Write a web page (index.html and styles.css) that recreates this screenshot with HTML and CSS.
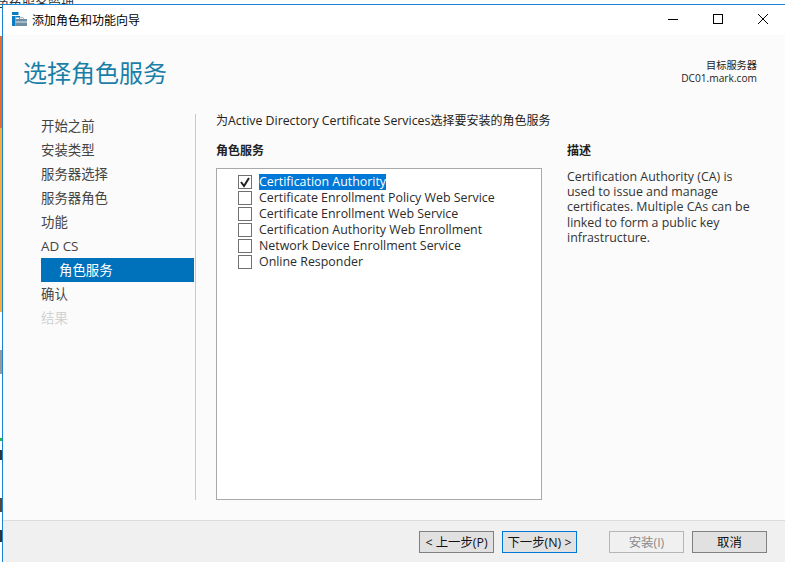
FILE: index.html
```html
<!DOCTYPE html>
<html lang="zh-CN">
<head>
<meta charset="utf-8">
<title>添加角色和功能向导</title>
<link rel="stylesheet" href="styles.css">
</head>
<body>
<div class="desktop">
  <div class="backdrop-title">角色服务管理</div>
  <div class="backdrop-strip"></div>
  <main class="window">
    <header class="titlebar">
      <svg class="app-icon" width="16" height="16" viewBox="0 0 16 16">
        <rect x="0" y="0" width="6.500" height="3" fill="#0a7cc4"/>
        <rect x="0" y="4" width="3.500" height="10" fill="#0a7cc4"/>
        <rect x="3.500" y="4" width="4.500" height="1.500" fill="#0a7cc4"/>
        <path d="M3.500 7H7V5.500h4.500V7H15v7H3.500z" fill="#6f8ea3"/>
        <rect x="8" y="6.200" width="3" height="0.800" fill="#fff"/>
        <rect x="3.500" y="9.500" width="11.500" height="1" fill="#dce6ee"/>
      </svg>
      <span class="title-text">添加角色和功能向导</span>
      <div class="win-controls">
        <svg width="12" height="12" viewBox="0 0 12 12"><path d="M1 6.500h10" stroke="#000" fill="none"/></svg>
        <svg width="12" height="12" viewBox="0 0 12 12"><rect x="1.500" y="1.500" width="9" height="9" stroke="#000" fill="none"/></svg>
        <svg width="12" height="12" viewBox="0 0 12 12"><path d="M1 1l10 10M11 1L1 11" stroke="#000" fill="none"/></svg>
      </div>
    </header>
    <div class="body">
      <section class="heading">
        <h1>选择角色服务</h1>
        <div class="target"><div>目标服务器</div><div>DC01.mark.com</div></div>
      </section>
      <section class="content">
        <nav class="steps">
          <div class="step">开始之前</div>
          <div class="step">安装类型</div>
          <div class="step">服务器选择</div>
          <div class="step">服务器角色</div>
          <div class="step">功能</div>
          <div class="step">AD CS</div>
          <div class="step active">角色服务</div>
          <div class="step">确认</div>
          <div class="step disabled">结果</div>
        </nav>
        <div class="pane">
          <p class="intro">为<span class="latin">Active Directory Certificate Services</span>选择要安装的角色服务</p>
          <div class="columns">
            <div class="roles">
              <h2>角色服务</h2>
              <div class="listbox">
                <label class="row"><span class="check"><svg width="12" height="12" viewBox="0 0 12 12"><path d="M2 6l3 4 5-8" stroke="#222" stroke-width="2" fill="none"/></svg></span><span class="selected">Certification Authority</span></label>
                <label class="row"><span class="check"></span><span>Certificate Enrollment Policy Web Service</span></label>
                <label class="row"><span class="check"></span><span>Certificate Enrollment Web Service</span></label>
                <label class="row"><span class="check"></span><span>Certification Authority Web Enrollment</span></label>
                <label class="row"><span class="check"></span><span>Network Device Enrollment Service</span></label>
                <label class="row"><span class="check"></span><span>Online Responder</span></label>
              </div>
            </div>
            <aside class="desc">
              <h2>描述</h2>
              <p>Certification Authority (CA) is used to issue and manage certificates. Multiple CAs can be linked to form a public key infrastructure.</p>
            </aside>
          </div>
        </div>
      </section>
    </div>
    <footer class="footer">
      <button class="btn">&lt; 上一步(P)</button>
      <button class="btn primary">下一步(N) &gt;</button>
      <button class="btn off">安装(I)</button>
      <button class="btn">取消</button>
    </footer>
  </main>
</div>
</body>
</html>
```
FILE: styles.css
```css
* { box-sizing: border-box; }
html, body { margin: 0; padding: 0; }
body {
  width: 785px;
  height: 562px;
  overflow: hidden;
  font-family: "Open Sans", "Noto Sans CJK SC", sans-serif;
  font-size: 12.4px;
  color: #2b2b2b;
}
.desktop { position: relative; width: 785px; height: 562px; background: #fff; overflow: hidden; }
.backdrop-title { position: absolute; left: -4px; top: -6px; font-size: 13px; color: #333; white-space: nowrap; }
.backdrop-strip {
  position: absolute; left: 0; top: 36px; width: 3px; height: 526px;
  background: linear-gradient(#ee6a2c 0 92px, #f5b03a 92px 276px, #fff 276px 314px, #999 314px 338px, #fff 338px 402px, #19c22c 402px 405px, #fff 405px 414px, #333 414px 424px, #fff 424px 462px, #5b4636 462px 476px, #fff 476px 494px, #333 494px 506px, #fff 506px);
}
.window {
  position: absolute; left: 2px; top: 4px; width: 783px; height: 558px;
  display: flex; flex-direction: column;
  border-top: 1px solid #1883d7; border-left: 1px solid #1883d7;
  background: #fbfbfb;
}
.titlebar { height: 30px; background: #fff; display: flex; align-items: center; padding-left: 9px; flex: none; }
.app-icon { flex: none; }
.title-text { margin-left: 4px; font-size: 12px; color: #000; }
.win-controls { margin-left: auto; display: flex; gap: 33px; padding: 0 16px 2px 0; }
.win-controls svg { display: block; }
.body { flex: 1; display: flex; flex-direction: column; min-height: 0; }
.heading { display: flex; justify-content: space-between; padding: 6px 28px 0 20px; height: 71px; flex: none; }
h1 { margin: 0; font-size: 24px; font-weight: 400; color: #1a7fa8; line-height: 64px; height: 64px; }
.target { text-align: right; font-size: 10.2px; line-height: 13px; color: #222; padding-top: 18px; }
.content { flex: 1; display: flex; min-height: 0; padding-left: 38px; }
.steps { width: 155px; border-right: 1px solid #c9c9c9; margin: 8px 0 20px; padding-right: 1px; flex: none; }
.step { height: 24px; line-height: 24px; font-size: 13.4px; color: #444; white-space: nowrap; }
.step.active { background: #0072bc; color: #fff; padding-left: 18px; }
.step.disabled { color: #d3d3d3; }
.pane { flex: 1; min-width: 0; padding: 0 0 0 20px; }
.intro { margin: 6px 0 0; font-size: 12px; line-height: 18px; color: #222; white-space: nowrap; }
.latin { font-size: 12.35px; }
.columns { display: flex; margin-top: 12px; }
.roles { width: 326px; flex: none; }
h2 { margin: 0; font-size: 12px; font-weight: 700; line-height: 18px; color: #222; }
.listbox {
  margin-top: 8px; height: 332px; width: 326px;
  border: 1px solid #a9a9a9; background: #fff; padding: 5px 0 0 21px;
}
.row { display: flex; align-items: center; height: 16px; }
.check { width: 14px; height: 14px; border: 1px solid #707070; background: #fff; margin-right: 7px; flex: none; display: flex; align-items: center; justify-content: center; }
.row span:last-child { line-height: 16px; white-space: nowrap; }
.selected { background: #0078d7; color: #fff; }
.desc { margin-left: 25px; width: 190px; }
.desc p { margin: 9px 0 0; line-height: 15.2px; color: #333; }
.footer {
  height: 42px; flex: none; background: #f0f0f0; border-top: 1px solid #dcdcdc;
  display: flex; align-items: flex-start; padding: 10px 0 0 416px;
}
.btn {
  width: 75px; height: 22px; padding: 0; font: inherit; font-size: 12.4px; color: #111;
  background: #e1e1e1; border: 1px solid #808080; margin-right: 8px; white-space: nowrap;
}
.btn.primary { border-color: #0078d7; margin-right: 32px; }
.btn.off { background: #f0f0f0; border-color: #b5b5b5; color: #8a8a8a; }
```
